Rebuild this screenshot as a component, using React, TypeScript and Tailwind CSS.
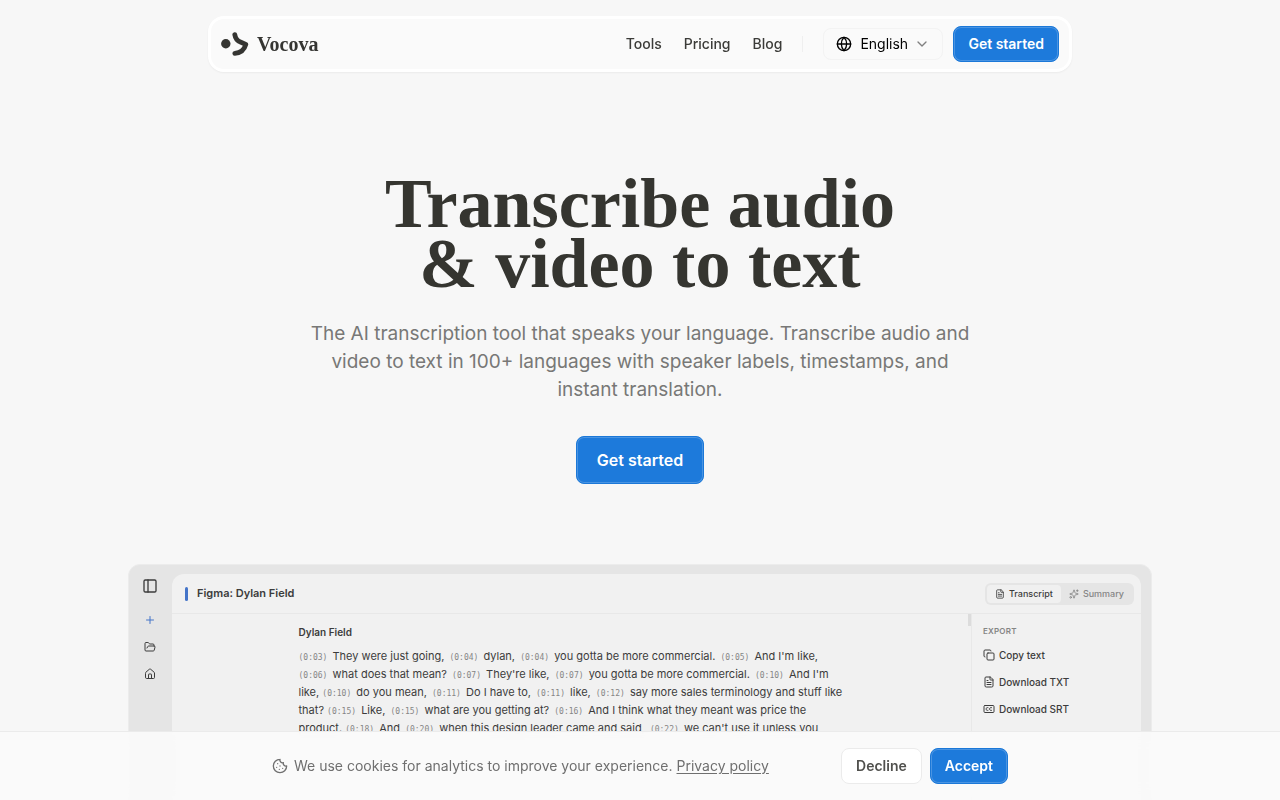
import React from "react";
import {
  ChevronDown,
  ClosedCaption,
  Copy,
  Cookie,
  FileText,
  FolderOpen,
  Globe,
  House,
  PanelLeft,
  Plus,
  Sparkles,
} from "lucide-react";

type Segment = [time: string | null, text: string];

const transcript: Segment[][] = [
  [["0:03", "They were just going,"], ["0:04", "dylan,"], ["0:04", "you gotta be more commercial."], ["0:05", "And I'm like,"]],
  [["0:06", "what does that mean?"], ["0:07", "They're like,"], ["0:07", "you gotta be more commercial."], ["0:10", "And I'm"]],
  [[null, "like,"], ["0:10", "do you mean,"], ["0:11", "Do I have to,"], ["0:11", "like,"], ["0:12", "say more sales terminology and stuff like"]],
  [[null, "that?"], ["0:15", "Like,"], ["0:15", "what are you getting at?"], ["0:16", "And I think what they meant was price the"]],
  [[null, "product."], ["0:18", "And"], ["0:20", "when this design leader came and said,"], ["0:22", "we can't use it unless you"]],
];

const navLinks = ["Tools", "Pricing", "Blog"];

const exportItems = [
  { label: "Copy text", icon: Copy },
  { label: "Download TXT", icon: FileText },
  { label: "Download SRT", icon: ClosedCaption },
];

function Logo() {
  return (
    <a href="#" className="flex items-center gap-2 text-[#353532]">
      <svg width="28" height="24" viewBox="0 0 28 24" fill="none" aria-hidden="true">
        <circle cx="4.8" cy="11.8" r="4.7" fill="currentColor" />
        <path
          d="M13.8 2.6C14.4 6.6 16.4 8.8 19.4 10L24.8 12.4C23.4 17.6 19.4 21 13.8 21.4"
          stroke="currentColor"
          strokeWidth="4.8"
          strokeLinecap="round"
          strokeLinejoin="round"
        />
      </svg>
      <span className="font-['Liberation_Serif',serif] text-[20px] leading-6 font-bold">Vocova</span>
    </a>
  );
}

function PrimaryButton({ children, large }: { children: React.ReactNode; large?: boolean }) {
  return (
    <button
      className={`rounded-lg border border-[#1b78d8] bg-[#1d7adb] font-semibold text-white inset-ring inset-ring-white/20 ${
        large ? "h-12 px-5 text-base" : "h-9 px-[14px] text-sm"
      }`}
    >
      {children}
    </button>
  );
}

function Header() {
  return (
    <header className="fixed inset-x-0 top-4 z-20 mx-auto max-w-4xl px-4">
      <div className="flex h-14 items-center justify-between rounded-2xl border-3 border-white bg-[#fafafa] px-[10px] shadow-xs">
        <Logo />
        <div className="flex items-center">
          <nav className="flex items-center gap-[22px] text-sm font-medium text-[#3b3b38]">
            {navLinks.map((link) => (
              <a key={link} href="#">{link}</a>
            ))}
          </nav>
          <div className="mx-5 h-4 w-px bg-[#efefef]" />
          <button className="mr-2.5 flex h-8 w-30 items-center rounded-lg border border-[#f3f3f3] px-3 text-sm text-black">
            <Globe className="mr-2 size-4" />
            English
            <ChevronDown className="ml-auto size-4 text-[#808080]" />
          </button>
          <PrimaryButton>Get started</PrimaryButton>
        </div>
      </div>
    </header>
  );
}

function TranscriptPreview() {
  return (
    <section className="mt-20 flex w-full max-w-5xl rounded-t-xl border border-[#ececec] bg-[#e5e5e5] pt-[9px] pr-[10px] text-[#3c3c3c]">
      <aside className="flex w-[43px] shrink-0 flex-col items-center pt-1 pr-[2px]">
        <button aria-label="Toggle sidebar"><PanelLeft className="size-4" /></button>
        <button aria-label="New" className="mt-5 text-[#4474c8]"><Plus className="size-3" /></button>
        <button aria-label="Files" className="mt-[15px]"><FolderOpen className="size-3" /></button>
        <button aria-label="Home" className="mt-[15px]"><House className="size-3" /></button>
      </aside>
      <div className="min-w-0 flex-1 rounded-t-xl bg-[#f1f1f1]">
        <div className="flex h-10 items-center border-b border-[#e8e8e8] pr-[7px] pl-[13px]">
          <div className="mr-[9px] h-[14px] w-[3px] rounded-sm bg-[#4474c8]" />
          <h2 className="text-[11px] font-semibold">Figma: Dylan Field</h2>
          <div className="ml-auto flex h-[22px] items-center rounded-md bg-[#e5e5e5] p-[2px] text-[9px] font-medium">
            <button className="flex h-full items-center gap-1 rounded-sm bg-[#f0f0f0] px-2">
              <FileText className="size-[10px]" />Transcript
            </button>
            <button className="flex h-full items-center gap-1 px-2 text-[#858585]">
              <Sparkles className="size-[10px]" />Summary
            </button>
          </div>
        </div>
        <div className="flex h-[320px]">
          <div className="relative flex-1 pt-[11px]">
            <div className="absolute top-0 right-0 h-3 w-[3px] bg-[#dcdcdc]" />
            <div className="mx-auto max-w-[546px]">
              <h3 className="text-[10px] leading-[14px] font-semibold">Dylan Field</h3>
              <p className="mt-2 text-[11px] leading-[18px] whitespace-nowrap">
                {transcript.map((line, i) => (
                  <span key={i} className="block">
                    {line.map(([time, text], j) => (
                      <React.Fragment key={j}>
                        {time && (
                          <span className="mr-0.5 font-['DejaVu_Sans_Mono',monospace] text-[8px] leading-none text-[#858585] not-first:ml-0.5">
                            ({time})
                          </span>
                        )}{" "}
                        {text}{" "}
                      </React.Fragment>
                    ))}
                  </span>
                ))}
              </p>
            </div>
          </div>
          <div className="w-[170px] border-l border-[#e8e8e8] pt-3 pl-[11px]">
            <h3 className="text-[8px] leading-[10px] font-semibold tracking-wide text-[#858585]">EXPORT</h3>
            <div className="mt-[11px] flex flex-col gap-[11px] text-[10px] leading-4 font-medium">
              {exportItems.map(({ label, icon: Icon }) => (
                <button key={label} className="flex items-center gap-1">
                  <Icon className="size-3" />
                  {label}
                </button>
              ))}
            </div>
          </div>
        </div>
      </div>
    </section>
  );
}

function CookieBanner() {
  return (
    <div className="fixed inset-x-0 bottom-0 z-20 border-t border-[#ebebeb] bg-[#fafafa]/95 py-4 backdrop-blur-sm">
      <div className="mx-auto flex max-w-3xl items-center justify-between px-4">
        <p className="flex items-center gap-1.5 text-sm text-[#6f6f6f]">
          <Cookie className="size-4" />
          <span>
            We use cookies for analytics to improve your experience.{" "}
            <a href="#" className="underline underline-offset-2">Privacy policy</a>
          </span>
        </p>
        <div className="flex gap-2">
          <button className="h-9 rounded-lg border border-[#ebebeb] bg-white px-[14px] text-sm font-semibold text-[#50504d]">
            Decline
          </button>
          <PrimaryButton>Accept</PrimaryButton>
        </div>
      </div>
    </div>
  );
}

export default function App() {
  return (
    <div className="h-screen overflow-hidden bg-[#f7f7f7] font-['Inter',sans-serif]">
      <Header />
      <main className="flex flex-col items-center px-4 pt-[174px]">
        <h1 className="text-center font-['Liberation_Serif',serif] text-[70px] leading-[60px] font-bold text-[#353530]">
          Transcribe audio
          <br />
          &amp; video to text
        </h1>
        <p className="mt-[26px] mb-8 max-w-2xl text-center text-[19px] leading-7 text-[#787876]">
          The AI transcription tool that speaks your language. Transcribe audio and video to text in 100+ languages
          with speaker labels, timestamps, and instant translation.
        </p>
        <PrimaryButton large>Get started</PrimaryButton>
        <TranscriptPreview />
      </main>
      <CookieBanner />
    </div>
  );
}
